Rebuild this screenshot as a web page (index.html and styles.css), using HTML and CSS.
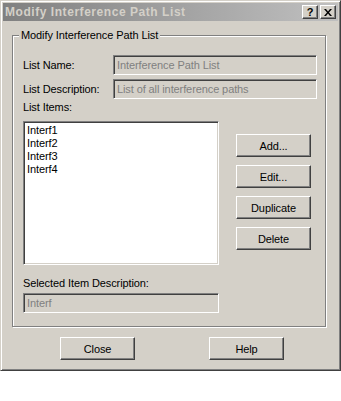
FILE: index.html
```html
<!DOCTYPE html>
<html>
<head>
<meta charset="utf-8">
<link rel="stylesheet" href="styles.css">
</head>
<body>
<div class="window">
  <div class="titlebar">
    <span class="title">Modify Interference Path List</span>
    <div class="caption-btns">
      <span class="cap-btn cap-help">?</span>
      <span class="cap-btn cap-close"><svg width="8" height="7" viewBox="0 0 8 7"><path d="M0 0h2l2 2.5L6 0h2L5 3.5 8 7H6L4 4.5 2 7H0l3-3.5z" fill="#000"/></svg></span>
    </div>
  </div>
  <div class="client">
    <div class="group">
      <span class="legend">Modify Interference Path List</span>
      <div class="form-grid">
        <span class="label">List Name:</span>
        <div class="field wide">Interference Path List</div>
        <span class="label">List Description:</span>
        <div class="field wide">List of all interference paths</div>
      </div>
      <span class="label items-label">List Items:</span>
      <div class="list-row">
        <div class="listbox">
          <div class="item">Interf1</div>
          <div class="item">Interf2</div>
          <div class="item">Interf3</div>
          <div class="item">Interf4</div>
        </div>
        <div class="side-btns">
          <div class="btn">Add...</div>
          <div class="btn">Edit...</div>
          <div class="btn">Duplicate</div>
          <div class="btn">Delete</div>
        </div>
      </div>
      <span class="label sel-label">Selected Item Description:</span>
      <div class="field narrow">Interf</div>
    </div>
    <div class="bottom-btns">
      <div class="btn">Close</div>
      <div class="btn">Help</div>
    </div>
  </div>
</div>
</body>
</html>
```
FILE: styles.css
```css
html, body {
  margin: 0;
  padding: 0;
  background: #fff;
}
body {
  font-family: "Liberation Sans", Arial, sans-serif;
  font-size: 11px;
  color: #000;
}
.window {
  width: 341px;
  height: 371px;
  box-sizing: border-box;
  background: #d4d0c8;
  border: 1px solid;
  border-color: #d4d0c8 #404040 #404040 #d4d0c8;
  box-shadow: inset 1px 1px 0 #fff, inset -1px -1px 0 #808080;
  padding: 2px;
  display: flex;
  flex-direction: column;
}
.titlebar {
  height: 18px;
  background: linear-gradient(to right, #808080, #c0c0c0);
  display: flex;
  align-items: center;
  justify-content: space-between;
  padding: 0 2px 0 2px;
}
.title {
  color: #d4d0c8;
  font-weight: bold;
  font-size: 12px;
  letter-spacing: 0.55px;
  line-height: 18px;
}
.caption-btns {
  display: flex;
  gap: 2px;
}
.cap-btn {
  width: 16px;
  height: 14px;
  box-sizing: border-box;
  background: #d4d0c8;
  border: 1px solid;
  border-color: #fff #404040 #404040 #fff;
  box-shadow: inset -1px -1px 0 #808080, inset 1px 1px 0 #d4d0c8;
  display: flex;
  align-items: center;
  justify-content: center;
  font-weight: bold;
  font-size: 11px;
  line-height: 12px;
}
.client {
  flex: 1;
  display: flex;
  flex-direction: column;
}
.group {
  margin: 14px 0 0 9px;
  width: 314px;
  height: 292px;
  box-sizing: border-box;
  border: 1px solid #808080;
  box-shadow: inset 1px 1px 0 #fff, 1px 1px 0 #fff;
  padding: 0 9px 0 10px;
  display: flex;
  flex-direction: column;
  align-items: flex-start;
}
.legend {
  margin: -8px 0 0 -4px;
  padding: 0 2px;
  height: 14px;
  line-height: 14px;
  background: #d4d0c8;
  letter-spacing: -0.1px;
}
.label {
  letter-spacing: -0.1px;
  line-height: 13px;
}
.form-grid {
  margin-top: 13px;
  display: grid;
  grid-template-columns: 90px 204px;
  grid-auto-rows: 20px;
  row-gap: 4px;
  align-items: center;
}
.field {
  height: 20px;
  box-sizing: border-box;
  border: 1px solid;
  border-color: #808080 #fff #fff #808080;
  box-shadow: inset 1px 1px 0 #404040, inset -1px -1px 0 #d4d0c8;
  background: #d4d0c8;
  color: #808080;
  padding: 0 2px 0 3px;
  line-height: 18px;
  letter-spacing: -0.1px;
  white-space: nowrap;
}
.wide {
  width: 204px;
}
.narrow {
  width: 196px;
  margin-top: 3px;
}
.items-label {
  margin-top: 2px;
}
.list-row {
  margin-top: 7px;
  display: flex;
  align-items: flex-start;
}
.listbox {
  width: 196px;
  height: 144px;
  box-sizing: border-box;
  border: 1px solid;
  border-color: #808080 #fff #fff #808080;
  box-shadow: inset 1px 1px 0 #404040, inset -1px -1px 0 #d4d0c8;
  background: #fff;
  padding: 2px 2px 0 3px;
}
.item {
  line-height: 13px;
  letter-spacing: -0.1px;
}
.side-btns {
  margin: 13px 0 0 17px;
  display: flex;
  flex-direction: column;
  gap: 8px;
}
.btn {
  width: 75px;
  height: 23px;
  box-sizing: border-box;
  border: 1px solid;
  border-color: #fff #404040 #404040 #fff;
  box-shadow: inset -1px -1px 0 #808080, inset 1px 1px 0 #d4d0c8;
  background: #d4d0c8;
  display: flex;
  align-items: center;
  justify-content: center;
  letter-spacing: -0.1px;
}
.sel-label {
  margin-top: 12px;
}
.bottom-btns {
  margin: 10px 0 0 57px;
  display: flex;
  gap: 74px;
}
```
